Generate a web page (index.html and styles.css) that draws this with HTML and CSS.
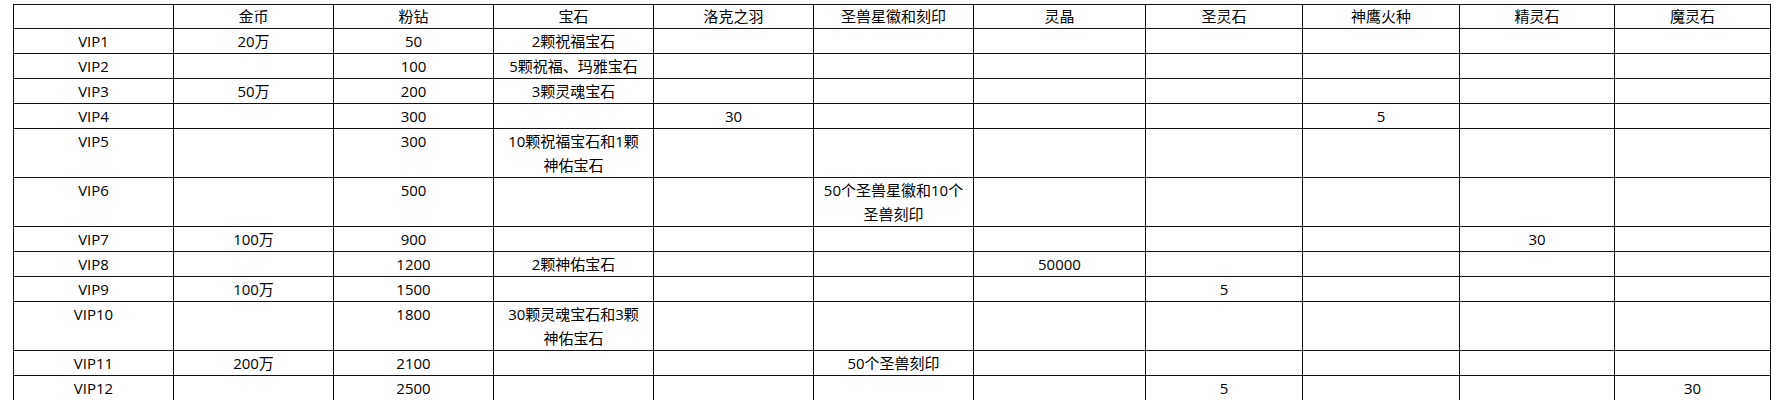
FILE: index.html
```html
<!DOCTYPE html>
<html lang="zh-CN">
<head>
<meta charset="utf-8">
<title>VIP 奖励表</title>
<link rel="stylesheet" href="styles.css">
</head>
<body>
<table class="vip">
  <colgroup>
    <col class="c160"><col class="c160"><col class="c160"><col class="c160"><col class="c160"><col class="c160">
    <col class="c172"><col class="c157"><col class="c157"><col class="c155"><col class="c156">
  </colgroup>
  <tr class="r-head"><td></td><td>金币</td><td>粉钻</td><td>宝石</td><td>洛克之羽</td><td>圣兽星徽和刻印</td><td>灵晶</td><td>圣灵石</td><td>神鹰火种</td><td>精灵石</td><td>魔灵石</td></tr>
  <tr class="r"><td>VIP1</td><td>20万</td><td>50</td><td>2颗祝福宝石</td><td></td><td></td><td></td><td></td><td></td><td></td><td></td></tr>
  <tr class="r"><td>VIP2</td><td></td><td>100</td><td>5颗祝福、玛雅宝石</td><td></td><td></td><td></td><td></td><td></td><td></td><td></td></tr>
  <tr class="r"><td>VIP3</td><td>50万</td><td>200</td><td>3颗灵魂宝石</td><td></td><td></td><td></td><td></td><td></td><td></td><td></td></tr>
  <tr class="r"><td>VIP4</td><td></td><td>300</td><td></td><td>30</td><td></td><td></td><td></td><td>5</td><td></td><td></td></tr>
  <tr class="r-tall"><td>VIP5</td><td></td><td>300</td><td>10颗祝福宝石和1颗<br>神佑宝石</td><td></td><td></td><td></td><td></td><td></td><td></td><td></td></tr>
  <tr class="r-tall"><td>VIP6</td><td></td><td>500</td><td></td><td></td><td>50个圣兽星徽和10个<br>圣兽刻印</td><td></td><td></td><td></td><td></td><td></td></tr>
  <tr class="r"><td>VIP7</td><td>100万</td><td>900</td><td></td><td></td><td></td><td></td><td></td><td></td><td>30</td><td></td></tr>
  <tr class="r"><td>VIP8</td><td></td><td>1200</td><td>2颗神佑宝石</td><td></td><td></td><td>50000</td><td></td><td></td><td></td><td></td></tr>
  <tr class="r"><td>VIP9</td><td>100万</td><td>1500</td><td></td><td></td><td></td><td></td><td>5</td><td></td><td></td><td></td></tr>
  <tr class="r-tall2"><td>VIP10</td><td></td><td>1800</td><td>30颗灵魂宝石和3颗<br>神佑宝石</td><td></td><td></td><td></td><td></td><td></td><td></td><td></td></tr>
  <tr class="r"><td>VIP11</td><td>200万</td><td>2100</td><td></td><td></td><td>50个圣兽刻印</td><td></td><td></td><td></td><td></td><td></td></tr>
  <tr class="r"><td>VIP12</td><td></td><td>2500</td><td></td><td></td><td></td><td></td><td>5</td><td></td><td></td><td>30</td></tr>
</table>
</body>
</html>
```

FILE: styles.css
```css
html, body {
  margin: 0;
  background: #ffffff;
}
body {
  padding: 4px 0 0 13px;
  font-family: "Open Sans", "Noto Sans CJK SC", sans-serif;
  font-size: 15px;
  color: #000000;
}
.vip {
  border-collapse: collapse;
  table-layout: fixed;
  width: 1758px;
}
.c160 { width: 160px; }
.c172 { width: 172px; }
.c157 { width: 157px; }
.c155 { width: 155px; }
.c156 { width: 156px; }
.vip td {
  border: 1px solid #111111;
  padding: 0;
  text-align: center;
  vertical-align: top;
  line-height: 24px;
  white-space: nowrap;
  overflow: hidden;
}
.r-head { height: 24px; }
.r-head td { line-height: 22px; }
.r { height: 25px; }
.r-tall { height: 48.5px; }
.r-tall2 { height: 48px; }
```
